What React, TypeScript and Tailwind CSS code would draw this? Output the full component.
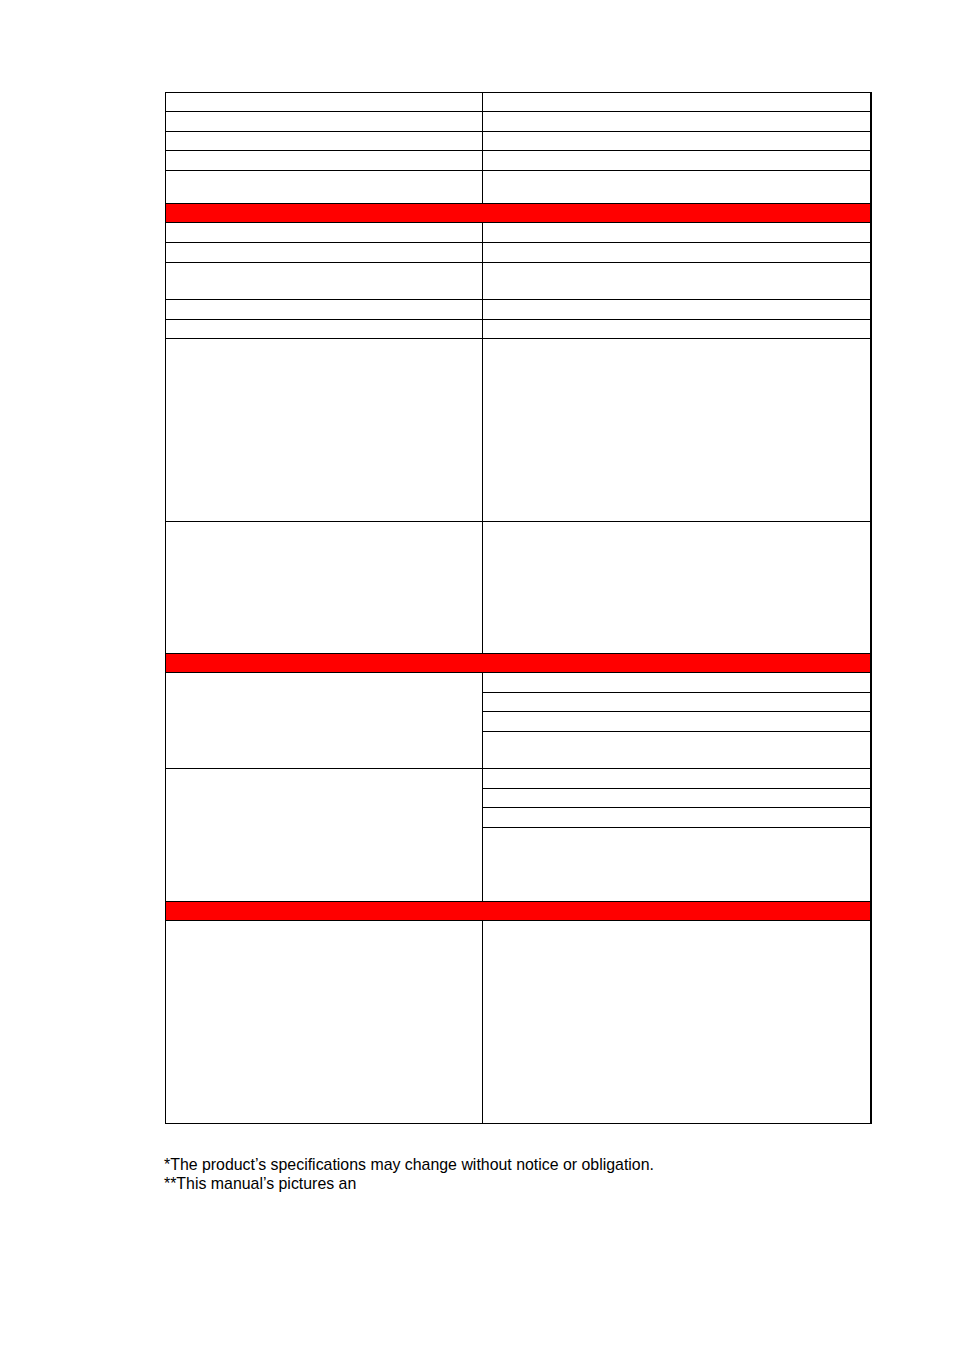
const rows: { h: number; red?: boolean; sub?: number[] }[] = [
  { h: 19 },
  { h: 20 },
  { h: 19 },
  { h: 20 },
  { h: 33 },
  { h: 19, red: true },
  { h: 20 },
  { h: 20 },
  { h: 37 },
  { h: 20 },
  { h: 19 },
  { h: 183 },
  { h: 132 },
  { h: 19, red: true },
  { h: 96, sub: [20, 19, 20, 37] },
  { h: 133, sub: [20, 19, 20, 74] },
  { h: 19, red: true },
  { h: 203 },
];

function Row({ h, red, sub }: { h: number; red?: boolean; sub?: number[] }) {
  if (red) {
    return <div className="border-b border-black bg-[#ff0000]" style={{ height: h }} />;
  }
  return (
    <div className="flex border-b border-black" style={{ height: h }}>
      <div className="w-[317px] shrink-0 border-r border-black" />
      <div className="flex flex-1 flex-col">
        {sub?.map((s, i) => (
          <div
            key={i}
            className={i < sub.length - 1 ? 'border-b border-black' : ''}
            style={{ height: i < sub.length - 1 ? s : undefined, flex: i < sub.length - 1 ? undefined : 1 }}
          />
        ))}
      </div>
    </div>
  );
}

export default function App() {
  return (
    <div className="min-h-[1354px] w-[954px] bg-white pt-[92px] font-['Liberation_Sans',Arial,sans-serif] text-black">
      <div className="ml-[165px] w-[707px] border-t border-l border-r-2 border-black">
        {rows.map((r, i) => (
          <Row key={i} {...r} />
        ))}
      </div>
      <div className="ml-[164px] mt-[31px] text-[15.9px] leading-[19px]">
        <p>*The product’s specifications may change without notice or obligation.</p>
        <p>**This manual’s pictures an</p>
      </div>
    </div>
  );
}
